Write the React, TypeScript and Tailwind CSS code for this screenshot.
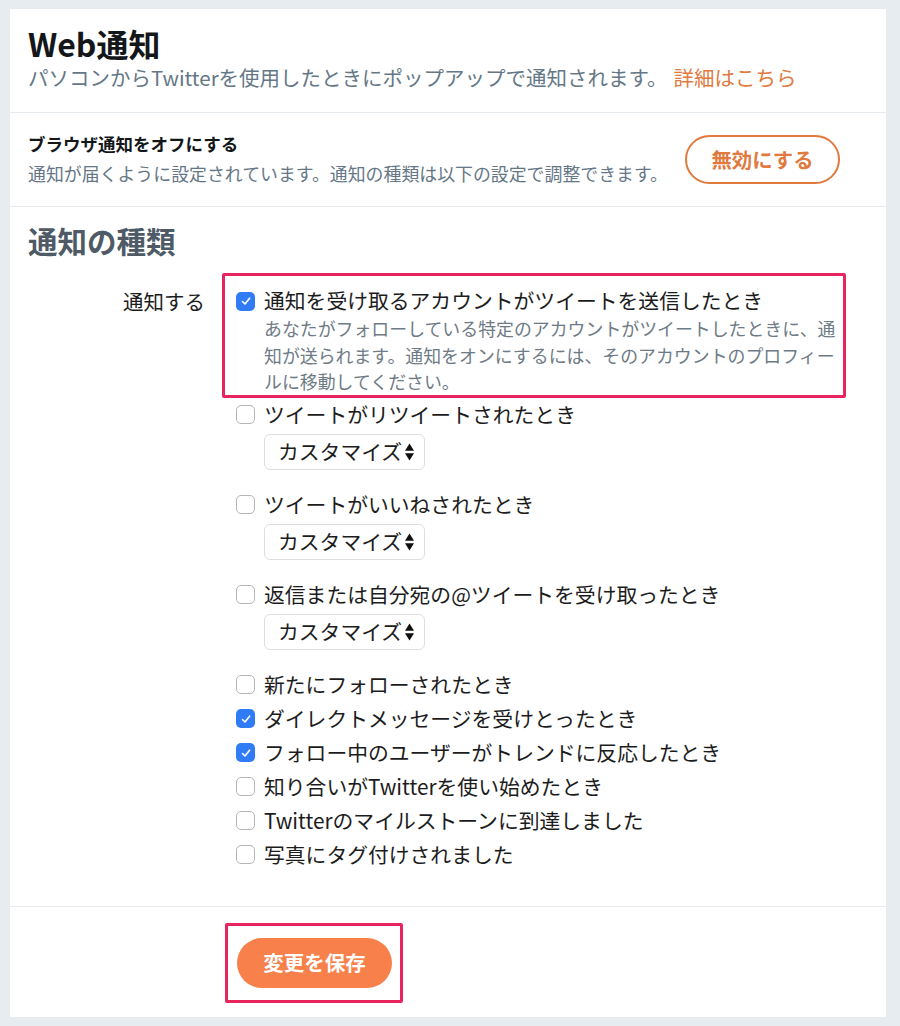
const items = [
  { label: "ツイートがリツイートされたとき", checked: false, select: true },
  { label: "ツイートがいいねされたとき", checked: false, select: true },
  { label: "返信または自分宛の@ツイートを受け取ったとき", checked: false, select: true },
  { label: "新たにフォローされたとき", checked: false, select: false },
  { label: "ダイレクトメッセージを受けとったとき", checked: true, select: false },
  { label: "フォロー中のユーザーがトレンドに反応したとき", checked: true, select: false },
  { label: "知り合いがTwitterを使い始めたとき", checked: false, select: false },
  { label: "Twitterのマイルストーンに到達しました", checked: false, select: false },
  { label: "写真にタグ付けされました", checked: false, select: false },
];

function CheckBox({ checked }: { checked: boolean }) {
  if (checked) {
    return (
      <span className="flex h-[19px] w-[19px] shrink-0 items-center justify-center rounded-[5px] bg-[#2f7cf6]">
        <svg viewBox="0 0 12 12" className="h-[12px] w-[12px]">
          <path
            d="M2.5 6.5 5 9 9.6 3.2"
            fill="none"
            stroke="white"
            strokeWidth="1.6"
            strokeLinecap="round"
            strokeLinejoin="round"
          />
        </svg>
      </span>
    );
  }
  return <span className="h-[19px] w-[19px] shrink-0 rounded-[5px] border border-[#b5b5b5] bg-white" />;
}

function Customize() {
  return (
    <div className="ml-[28px] mt-[2px] mb-[18px] flex h-[36px] w-[161px] items-center rounded-[6px] border border-[#dedede] bg-white pl-[13px] text-[20.8px] text-[#1c1c1c]">
      <span>カスタマイズ</span>
      <svg viewBox="0 0 9 18" className="ml-[3px] h-[18px] w-[9px]">
        <path d="M4.5 0.5 9 7.8H0Z" fill="#111" />
        <path d="M4.5 17.5 0 10.2h9Z" fill="#111" />
      </svg>
    </div>
  );
}

export default function App() {
  return (
    <div className="min-h-screen bg-[#e6ecf0] pt-[9px] font-['Noto_Sans_CJK_JP','Noto_Sans',sans-serif]">
      <div className="ml-[10px] w-[876px] bg-white">
        {/* header */}
        <div className="border-b border-[#e6ecf0] px-[18px] pt-[14px] pb-[21px]">
          <h1 className="text-[32px] font-bold leading-[40px] text-[#14171a]">Web通知</h1>
          <p className="text-[20.5px] leading-[28px] text-[#657786]">
            パソコンからTwitterを使用したときにポップアップで通知されます。
            <span className="ml-[6px] text-[#e07a3f]">詳細はこちら</span>
          </p>
        </div>

        {/* browser toggle */}
        <div className="flex items-center justify-between border-b border-[#e6ecf0] pl-[18px] pr-[46px] pt-[17px] pb-[18px]">
          <div>
            <div className="text-[17.5px] font-bold leading-[28px] text-[#14171a]">ブラウザ通知をオフにする</div>
            <div className="text-[17.9px] leading-[30px] text-[#657786]">
              通知が届くように設定されています。通知の種類は以下の設定で調整できます。
            </div>
          </div>
          <button className="h-[49px] w-[155px] rounded-full border-2 border-[#e07a3f] text-[20.4px] font-bold text-[#e07a3f]">
            無効にする
          </button>
        </div>

        {/* types */}
        <div className="border-b border-[#e6ecf0] px-[18px] pt-[13px] pb-[34px]">
          <h2 className="text-[29.5px] font-bold leading-[40px] text-[#4e5a66]">通知の種類</h2>
          <div className="mt-[13px] flex gap-[31px]">
            <div className="w-[177px] pt-[14px] text-right text-[20.5px] leading-[28px] text-[#1c1c1c]">通知する</div>
            <div className="flex flex-col">
              <div className="-ml-[14px] w-[624px] rounded-[2px] border-[3px] border-[#e8245f] pl-[11px] pt-[11px]">
                <div className="flex h-[28px] items-center gap-[9px] text-[20.8px] text-[#1c1c1c]">
                  <CheckBox checked />
                  <span>通知を受け取るアカウントがツイートを送信したとき</span>
                </div>
                <div className="whitespace-nowrap pl-[28px] text-[17.9px] leading-[26.5px] text-[#6e7a85]">
                  あなたがフォローしている特定のアカウントがツイートしたときに、通
                  <br />
                  知が送られます。通知をオンにするには、そのアカウントのプロフィー
                  <br />
                  ルに移動してください。
                </div>
              </div>
              {items.map((item) => (
                <div key={item.label}>
                  <div className="flex h-[34px] items-center gap-[9px] text-[20.8px] text-[#1c1c1c]">
                    <CheckBox checked={item.checked} />
                    <span>{item.label}</span>
                  </div>
                  {item.select && <Customize />}
                </div>
              ))}
            </div>
          </div>
        </div>

        {/* footer */}
        <div className="pl-[215px] pt-[16px] pb-[14px]">
          <div className="inline-flex rounded-[2px] border-[3px] border-[#e8245f] py-[12px] pl-[9px] pr-[8px]">
            <button className="h-[50px] w-[155px] rounded-full bg-[#f7804b] text-[20.5px] font-bold text-white">
              変更を保存
            </button>
          </div>
        </div>
      </div>
    </div>
  );
}
